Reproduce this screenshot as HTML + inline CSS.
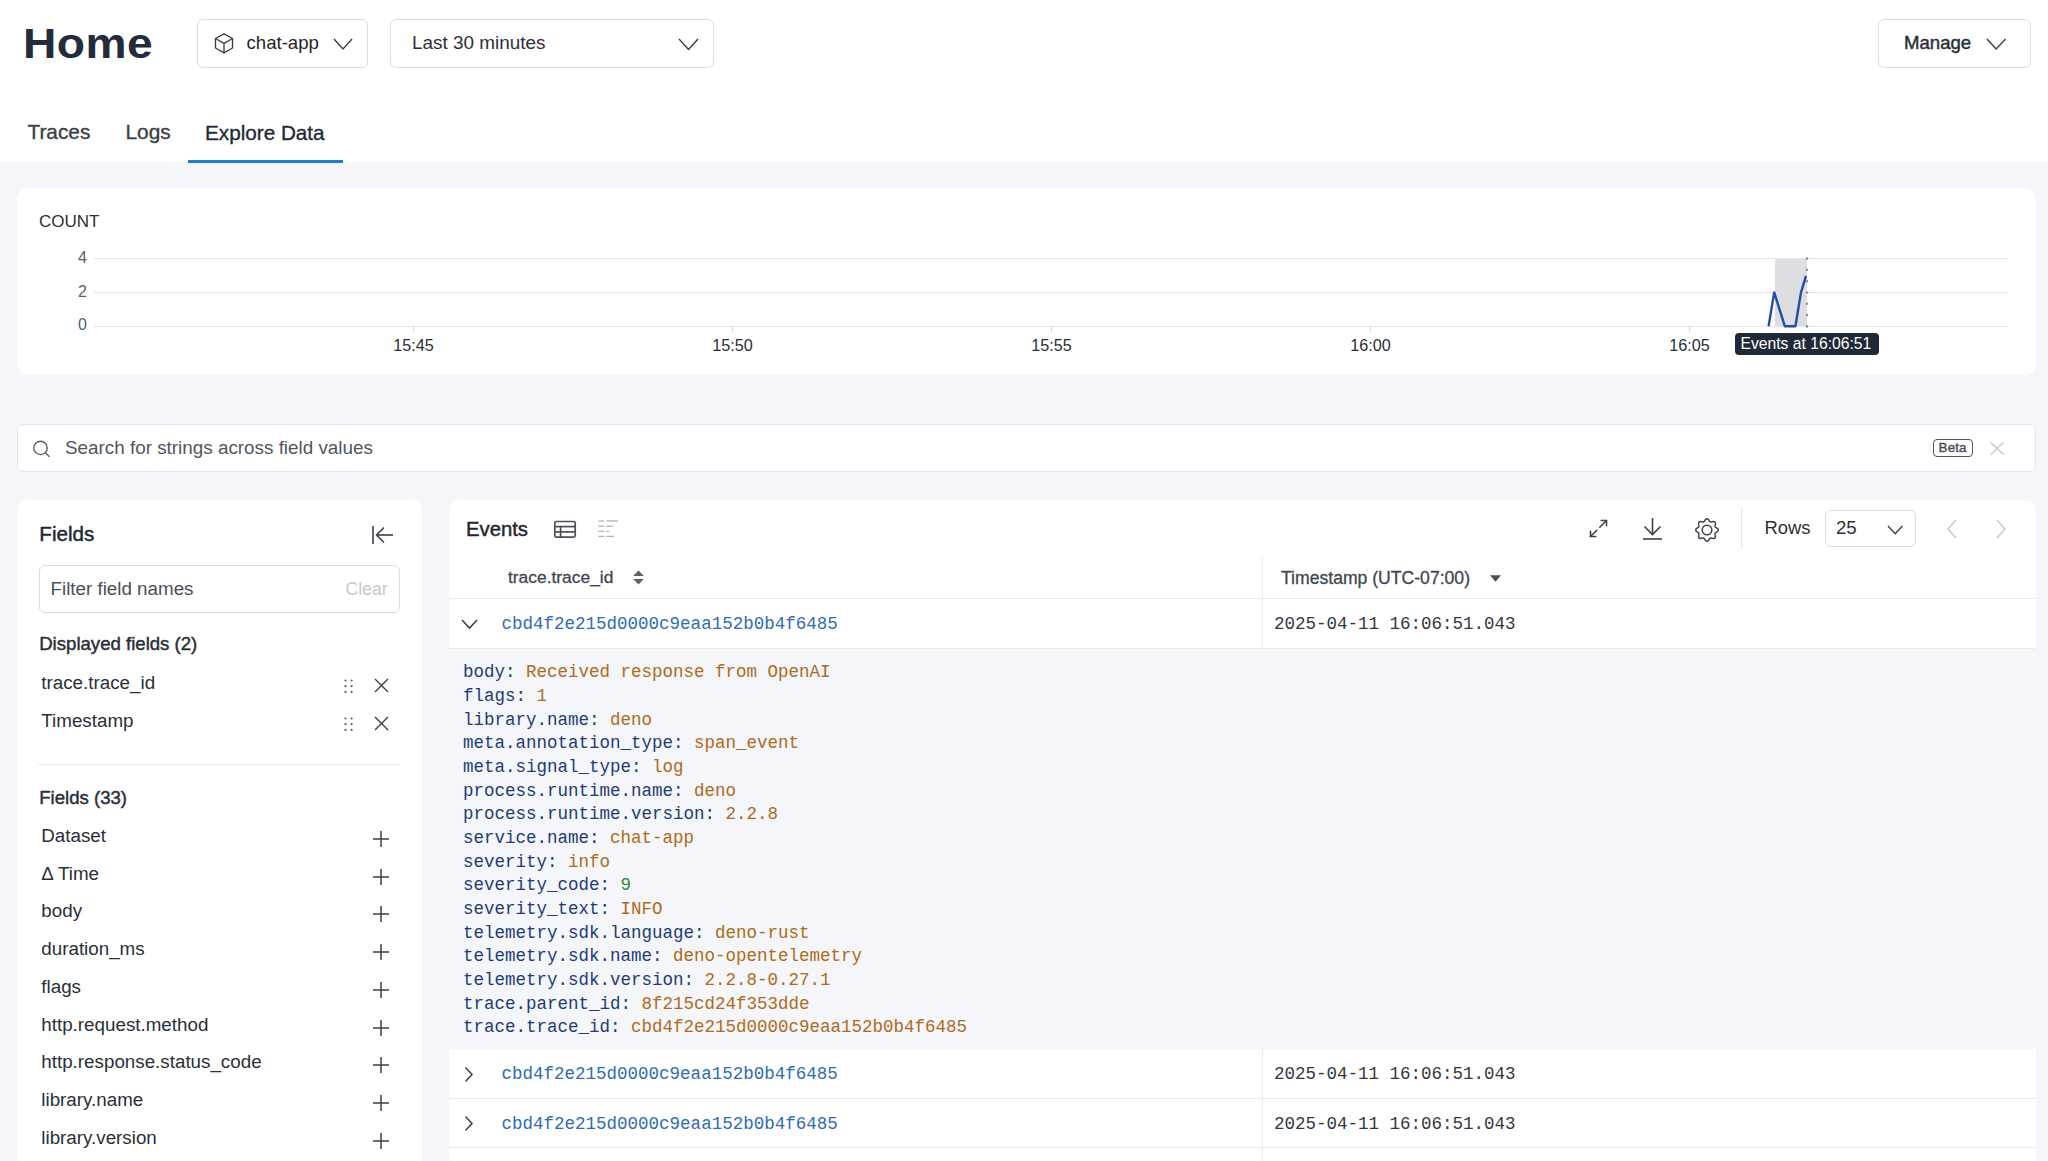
<!DOCTYPE html>
<html><head><meta charset="utf-8"><title>Home - Explore Data</title>
<style>
html,body{margin:0;padding:0}
body{width:2048px;height:1161px;overflow:hidden;position:relative;background:#f4f6f9;font-family:'Liberation Sans', sans-serif}
.t{position:absolute;white-space:nowrap}
.r{position:absolute;display:block}
</style></head><body>
<div class="r" style="left:0.0px;top:0.0px;width:2048.0px;height:162.0px;background:#fff"></div>
<div class="t" style="left:23.2px;top:22.5px;font-size:42px;line-height:42px;color:#222c3a;font-weight:700;font-family:'Liberation Sans', sans-serif;letter-spacing:0.4px;transform:scaleX(1.1);transform-origin:0 0">Home</div>
<div class="r" style="left:197.0px;top:19.0px;width:170.5px;height:49.0px;background:#fff;border:1px solid #d9dce2;border-radius:6px;box-sizing:border-box"></div>
<svg class="r" style="left:213px;top:32px" width="22" height="23" viewBox="0 0 22 23"><g fill="none" stroke="#3a3f47" stroke-width="1.35" stroke-linejoin="round"><path d="M11 1.8 L19.5 6.5 L19.5 16 L11 20.8 L2.5 16 L2.5 6.5 Z"/><path d="M2.5 6.5 L11 11.3 L19.5 6.5 M11 11.3 L11 20.8"/></g></svg>
<div class="t" style="left:246.5px;top:34.2px;font-size:18.6px;line-height:18.6px;color:#1f242b;font-weight:400;font-family:'Liberation Sans', sans-serif;">chat-app</div>
<svg class="r" style="left:332px;top:37px" width="22" height="14" viewBox="0 0 22 14"><polyline points="2,2 11.0,12.0 20.0,2" fill="none" stroke="#3a3f47" stroke-width="1.4"/></svg>
<div class="r" style="left:389.5px;top:19.0px;width:324.3px;height:49.0px;background:#fff;border:1px solid #d9dce2;border-radius:6px;box-sizing:border-box"></div>
<div class="t" style="left:412.0px;top:34.4px;font-size:18.9px;line-height:18.9px;color:#2b3038;font-weight:400;font-family:'Liberation Sans', sans-serif;">Last 30 minutes</div>
<svg class="r" style="left:677px;top:36.5px" width="23" height="14" viewBox="0 0 23 14"><polyline points="2,2 11.5,12.5 21.0,2" fill="none" stroke="#3a3f47" stroke-width="1.4"/></svg>
<div class="r" style="left:1878.0px;top:19.0px;width:153.0px;height:49.0px;background:#fff;border:1px solid #d9dce2;border-radius:6px;box-sizing:border-box"></div>
<div class="t" style="left:1904.0px;top:34.2px;font-size:18.6px;line-height:18.6px;color:#2b3038;font-weight:400;font-family:'Liberation Sans', sans-serif;-webkit-text-stroke:0.45px currentColor">Manage</div>
<svg class="r" style="left:1985px;top:37px" width="22" height="14" viewBox="0 0 22 14"><polyline points="2,2 11.2,12.0 20.5,2" fill="none" stroke="#3a3f47" stroke-width="1.4"/></svg>
<div class="t" style="left:27.5px;top:122.3px;font-size:20.8px;line-height:20.8px;color:#3b4048;font-weight:400;font-family:'Liberation Sans', sans-serif;-webkit-text-stroke:0.35px currentColor">Traces</div>
<div class="t" style="left:125.5px;top:122.3px;font-size:20.8px;line-height:20.8px;color:#3b4048;font-weight:400;font-family:'Liberation Sans', sans-serif;-webkit-text-stroke:0.35px currentColor">Logs</div>
<div class="t" style="left:205.0px;top:123.0px;font-size:20.7px;line-height:20.7px;color:#1f2937;font-weight:400;font-family:'Liberation Sans', sans-serif;-webkit-text-stroke:0.35px currentColor">Explore Data</div>
<div class="r" style="left:188.0px;top:160.0px;width:155.0px;height:3.0px;background:#1a7fd4"></div>
<div class="r" style="left:17.0px;top:188.0px;width:2019.0px;height:186.5px;background:#fff;border-radius:12px"></div>
<div class="t" style="left:39.0px;top:213.0px;font-size:17px;line-height:17px;color:#2a2f36;font-weight:400;font-family:'Liberation Sans', sans-serif;">COUNT</div>
<div class="t" style="left:78.0px;top:249.7px;font-size:16px;line-height:16px;color:#5a606b;font-weight:400;font-family:'Liberation Sans', sans-serif;">4</div>
<div class="r" style="left:94.0px;top:258.0px;width:1914.0px;height:1.0px;background:#e3e5e9"></div>
<div class="t" style="left:78.0px;top:283.6px;font-size:16px;line-height:16px;color:#5a606b;font-weight:400;font-family:'Liberation Sans', sans-serif;">2</div>
<div class="r" style="left:94.0px;top:291.9px;width:1914.0px;height:1.0px;background:#e3e5e9"></div>
<div class="t" style="left:78.0px;top:317.4px;font-size:16px;line-height:16px;color:#5a606b;font-weight:400;font-family:'Liberation Sans', sans-serif;">0</div>
<div class="r" style="left:94.0px;top:325.7px;width:1914.0px;height:1.0px;background:#e3e5e9"></div>
<div class="r" style="left:413.0px;top:326.0px;width:1.0px;height:6.0px;background:#d5d8dd"></div>
<div class="t" style="left:373.5px;top:337.2px;width:80px;text-align:center;font-size:16.2px;line-height:16.2px;color:#2a2f36;font-family:'Liberation Sans', sans-serif">15:45</div>
<div class="r" style="left:732.0px;top:326.0px;width:1.0px;height:6.0px;background:#d5d8dd"></div>
<div class="t" style="left:692.5px;top:337.2px;width:80px;text-align:center;font-size:16.2px;line-height:16.2px;color:#2a2f36;font-family:'Liberation Sans', sans-serif">15:50</div>
<div class="r" style="left:1051.0px;top:326.0px;width:1.0px;height:6.0px;background:#d5d8dd"></div>
<div class="t" style="left:1011.5px;top:337.2px;width:80px;text-align:center;font-size:16.2px;line-height:16.2px;color:#2a2f36;font-family:'Liberation Sans', sans-serif">15:55</div>
<div class="r" style="left:1370.0px;top:326.0px;width:1.0px;height:6.0px;background:#d5d8dd"></div>
<div class="t" style="left:1330.5px;top:337.2px;width:80px;text-align:center;font-size:16.2px;line-height:16.2px;color:#2a2f36;font-family:'Liberation Sans', sans-serif">16:00</div>
<div class="r" style="left:1689.0px;top:326.0px;width:1.0px;height:6.0px;background:#d5d8dd"></div>
<div class="t" style="left:1649.5px;top:337.2px;width:80px;text-align:center;font-size:16.2px;line-height:16.2px;color:#2a2f36;font-family:'Liberation Sans', sans-serif">16:05</div>
<div class="r" style="left:1775.0px;top:258.5px;width:32.0px;height:67.5px;background:#dcdee2"></div>
<svg class="r" style="left:1760px;top:250px" width="60" height="84" viewBox="0 0 60 84"><line x1="47" y1="8.6" x2="47" y2="76.5" stroke="#8c9099" stroke-width="2.6" stroke-linecap="round" stroke-dasharray="0 11.3" /><polyline points="8.6,76.2 14.2,42.4 24.8,76.2 35.4,76.2 41,42.4 46,25.8" fill="none" stroke="#1f4fa8" stroke-width="2.4" stroke-linejoin="round"/></svg>
<div class="r" style="left:1735.0px;top:333.0px;width:144.0px;height:22.0px;background:#1f2937;border-radius:4px"></div>
<div class="t" style="left:1740.5px;top:336.0px;font-size:15.7px;line-height:15.7px;color:#fff;font-weight:400;font-family:'Liberation Sans', sans-serif;">Events at 16:06:51</div>
<div class="r" style="left:17.0px;top:424.0px;width:2019.0px;height:48.0px;background:#fff;border:1px solid #e3e5ea;border-radius:6px;box-sizing:border-box"></div>
<svg class="r" style="left:32px;top:439px" width="20" height="20" viewBox="0 0 20 20"><circle cx="8.5" cy="8.9" r="6.7" fill="none" stroke="#575b63" stroke-width="1.35"/><line x1="13.4" y1="13.7" x2="17.5" y2="17.9" stroke="#575b63" stroke-width="1.35"/></svg>
<div class="t" style="left:65.0px;top:438.7px;font-size:18.85px;line-height:18.85px;color:#50565f;font-weight:400;font-family:'Liberation Sans', sans-serif;">Search for strings across field values</div>
<div class="r" style="left:1932.5px;top:438.5px;width:40.2px;height:18.7px;border:1.8px solid #505361;border-radius:4px;box-sizing:border-box"></div>
<div class="t" style="left:1932.5px;top:438.5px;width:40.2px;height:18.5px;text-align:center;font-size:13.4px;line-height:18.5px;color:#4b4e5a;font-family:'Liberation Sans', sans-serif;-webkit-text-stroke:0.4px currentColor;letter-spacing:0.1px">Beta</div>
<svg class="r" style="left:1989px;top:441px" width="16" height="15" viewBox="0 0 16 15"><path d="M1.5 1.5 L14.5 13.5 M14.5 1.5 L1.5 13.5" stroke="#c2c5cb" stroke-width="1.2"/></svg>
<div class="r" style="left:17.0px;top:500.0px;width:405.0px;height:700.0px;background:#fff;border-radius:10px"></div>
<div class="t" style="left:39.3px;top:524.2px;font-size:20.6px;line-height:20.6px;color:#222831;font-weight:400;font-family:'Liberation Sans', sans-serif;-webkit-text-stroke:0.45px currentColor">Fields</div>
<svg class="r" style="left:370px;top:524px" width="26" height="22" viewBox="0 0 26 22"><g stroke="#3a3f47" stroke-width="1.6" fill="none"><line x1="3" y1="2" x2="3" y2="20"/><line x1="7" y1="11" x2="23" y2="11"/><polyline points="14,3.5 6.5,11 14,18.5"/></g></svg>
<div class="r" style="left:38.6px;top:564.7px;width:361.9px;height:48.8px;background:#fff;border:1px solid #d8dbe3;border-radius:6px;box-sizing:border-box"></div>
<div class="t" style="left:50.5px;top:580.0px;font-size:18.8px;line-height:18.8px;color:#4a4f58;font-weight:400;font-family:'Liberation Sans', sans-serif;">Filter field names</div>
<div class="t" style="left:345.5px;top:581.0px;font-size:17.6px;line-height:17.6px;color:#c5c9d3;font-weight:400;font-family:'Liberation Sans', sans-serif;">Clear</div>
<div class="t" style="left:39.2px;top:635.4px;font-size:18.6px;line-height:18.6px;color:#2a2f38;font-weight:400;font-family:'Liberation Sans', sans-serif;-webkit-text-stroke:0.45px currentColor">Displayed fields (2)</div>
<div class="t" style="left:41.3px;top:673.9px;font-size:18.8px;line-height:18.8px;color:#2a2f38;font-weight:400;font-family:'Liberation Sans', sans-serif;">trace.trace_id</div>
<svg class="r" style="left:344.2px;top:678.8px" width="10" height="15" viewBox="0 0 10 15"><circle cx="1.5" cy="1.5" r="1.1" fill="#5a5e66"/><circle cx="1.5" cy="7.2" r="1.1" fill="#5a5e66"/><circle cx="1.5" cy="12.9" r="1.1" fill="#5a5e66"/><circle cx="7.6" cy="1.5" r="1.1" fill="#5a5e66"/><circle cx="7.6" cy="7.2" r="1.1" fill="#5a5e66"/><circle cx="7.6" cy="12.9" r="1.1" fill="#5a5e66"/></svg>
<svg class="r" style="left:373px;top:677px" width="17" height="17" viewBox="0 0 17 17"><path d="M2 2 L15 15 M15 2 L2 15" stroke="#3a3f47" stroke-width="1.35"/></svg>
<div class="t" style="left:41.3px;top:712.0px;font-size:18.8px;line-height:18.8px;color:#2a2f38;font-weight:400;font-family:'Liberation Sans', sans-serif;">Timestamp</div>
<svg class="r" style="left:344.2px;top:716.9px" width="10" height="15" viewBox="0 0 10 15"><circle cx="1.5" cy="1.5" r="1.1" fill="#5a5e66"/><circle cx="1.5" cy="7.2" r="1.1" fill="#5a5e66"/><circle cx="1.5" cy="12.9" r="1.1" fill="#5a5e66"/><circle cx="7.6" cy="1.5" r="1.1" fill="#5a5e66"/><circle cx="7.6" cy="7.2" r="1.1" fill="#5a5e66"/><circle cx="7.6" cy="12.9" r="1.1" fill="#5a5e66"/></svg>
<svg class="r" style="left:373px;top:715px" width="17" height="17" viewBox="0 0 17 17"><path d="M2 2 L15 15 M15 2 L2 15" stroke="#3a3f47" stroke-width="1.35"/></svg>
<div class="r" style="left:38.0px;top:764.2px;width:362.0px;height:1.0px;background:#e9ebef"></div>
<div class="t" style="left:39.2px;top:788.7px;font-size:18.6px;line-height:18.6px;color:#2a2f38;font-weight:400;font-family:'Liberation Sans', sans-serif;-webkit-text-stroke:0.45px currentColor">Fields (33)</div>
<div class="t" style="left:41.3px;top:827.0px;font-size:18.8px;line-height:18.8px;color:#2a2f38;font-weight:400;font-family:'Liberation Sans', sans-serif;">Dataset</div>
<svg class="r" style="left:371px;top:829px" width="20" height="20" viewBox="0 0 20 20"><path d="M10.0 2 L10.0 18 M2 10.0 L18 10.0" stroke="#3a3f47" stroke-width="1.5"/></svg>
<div class="t" style="left:41.3px;top:864.7px;font-size:18.8px;line-height:18.8px;color:#2a2f38;font-weight:400;font-family:'Liberation Sans', sans-serif;">&Delta; Time</div>
<svg class="r" style="left:371px;top:867px" width="20" height="20" viewBox="0 0 20 20"><path d="M10.0 2 L10.0 18 M2 10.0 L18 10.0" stroke="#3a3f47" stroke-width="1.5"/></svg>
<div class="t" style="left:41.3px;top:902.4px;font-size:18.8px;line-height:18.8px;color:#2a2f38;font-weight:400;font-family:'Liberation Sans', sans-serif;">body</div>
<svg class="r" style="left:371px;top:904px" width="20" height="20" viewBox="0 0 20 20"><path d="M10.0 2 L10.0 18 M2 10.0 L18 10.0" stroke="#3a3f47" stroke-width="1.5"/></svg>
<div class="t" style="left:41.3px;top:940.1px;font-size:18.8px;line-height:18.8px;color:#2a2f38;font-weight:400;font-family:'Liberation Sans', sans-serif;">duration_ms</div>
<svg class="r" style="left:371px;top:942px" width="20" height="20" viewBox="0 0 20 20"><path d="M10.0 2 L10.0 18 M2 10.0 L18 10.0" stroke="#3a3f47" stroke-width="1.5"/></svg>
<div class="t" style="left:41.3px;top:977.8px;font-size:18.8px;line-height:18.8px;color:#2a2f38;font-weight:400;font-family:'Liberation Sans', sans-serif;">flags</div>
<svg class="r" style="left:371px;top:980px" width="20" height="20" viewBox="0 0 20 20"><path d="M10.0 2 L10.0 18 M2 10.0 L18 10.0" stroke="#3a3f47" stroke-width="1.5"/></svg>
<div class="t" style="left:41.3px;top:1015.5px;font-size:18.8px;line-height:18.8px;color:#2a2f38;font-weight:400;font-family:'Liberation Sans', sans-serif;">http.request.method</div>
<svg class="r" style="left:371px;top:1018px" width="20" height="20" viewBox="0 0 20 20"><path d="M10.0 2 L10.0 18 M2 10.0 L18 10.0" stroke="#3a3f47" stroke-width="1.5"/></svg>
<div class="t" style="left:41.3px;top:1053.2px;font-size:18.8px;line-height:18.8px;color:#2a2f38;font-weight:400;font-family:'Liberation Sans', sans-serif;">http.response.status_code</div>
<svg class="r" style="left:371px;top:1055px" width="20" height="20" viewBox="0 0 20 20"><path d="M10.0 2 L10.0 18 M2 10.0 L18 10.0" stroke="#3a3f47" stroke-width="1.5"/></svg>
<div class="t" style="left:41.3px;top:1090.9px;font-size:18.8px;line-height:18.8px;color:#2a2f38;font-weight:400;font-family:'Liberation Sans', sans-serif;">library.name</div>
<svg class="r" style="left:371px;top:1093px" width="20" height="20" viewBox="0 0 20 20"><path d="M10.0 2 L10.0 18 M2 10.0 L18 10.0" stroke="#3a3f47" stroke-width="1.5"/></svg>
<div class="t" style="left:41.3px;top:1128.6px;font-size:18.8px;line-height:18.8px;color:#2a2f38;font-weight:400;font-family:'Liberation Sans', sans-serif;">library.version</div>
<svg class="r" style="left:371px;top:1131px" width="20" height="20" viewBox="0 0 20 20"><path d="M10.0 2 L10.0 18 M2 10.0 L18 10.0" stroke="#3a3f47" stroke-width="1.5"/></svg>
<div class="r" style="left:449.0px;top:500.0px;width:1587.0px;height:700.0px;background:#fff;border-radius:10px"></div>
<div class="t" style="left:466.0px;top:519.4px;font-size:20.3px;line-height:20.3px;color:#222831;font-weight:400;font-family:'Liberation Sans', sans-serif;-webkit-text-stroke:0.45px currentColor">Events</div>
<svg class="r" style="left:553px;top:520px" width="24" height="19" viewBox="0 0 24 19"><g fill="none" stroke="#4b4f58" stroke-width="1.7"><rect x="1.8" y="1.5" width="20.4" height="15.6" rx="1.5"/><line x1="1.8" y1="6.6" x2="22.2" y2="6.6"/><line x1="1.8" y1="11.9" x2="22.2" y2="11.9"/><line x1="7.6" y1="6.6" x2="7.6" y2="17.1"/></g></svg>
<svg class="r" style="left:597px;top:519px" width="23" height="20" viewBox="0 0 23 20"><g stroke="#a9adc0" stroke-width="1.2"><line x1="1.4" y1="2" x2="7.3" y2="2"/><line x1="9.3" y1="2" x2="21" y2="2"/><line x1="1.4" y1="7.2" x2="7.3" y2="7.2"/><line x1="9.3" y1="7.2" x2="16.2" y2="7.2"/><line x1="1.4" y1="12.3" x2="7.3" y2="12.3"/><line x1="9.3" y1="12.3" x2="12.3" y2="12.3"/><line x1="1.4" y1="17.4" x2="7.3" y2="17.4"/><line x1="9.3" y1="17.4" x2="17" y2="17.4"/></g></svg>
<svg class="r" style="left:1587px;top:518px" width="23" height="22" viewBox="0 0 23 22"><g stroke="#3e434b" stroke-width="1.6" fill="none" stroke-linecap="round"><line x1="3.5" y1="18.5" x2="9.8" y2="12.2"/><line x1="12.8" y1="9.2" x2="19.5" y2="2.5"/><polyline points="14.2,2.5 19.5,2.5 19.5,7.8"/><polyline points="3.5,13.2 3.5,18.5 8.8,18.5"/></g></svg>
<svg class="r" style="left:1641px;top:516px" width="23" height="25" viewBox="0 0 23 25"><g stroke="#3e434b" stroke-width="1.6" fill="none"><line x1="11.5" y1="2" x2="11.5" y2="18.5"/><polyline points="3.5,10.5 11.5,18.5 19.5,10.5"/><line x1="2" y1="23" x2="21" y2="23"/></g></svg>
<svg class="r" style="left:1694.5px;top:517.5px" width="24" height="24" viewBox="0 0 24 24"><g stroke="#3e434b" stroke-width="1.5" fill="none"><polygon points="23.25,12.00 23.24,12.20 23.19,12.39 23.13,12.58 23.03,12.77 22.92,12.96 22.78,13.13 22.62,13.30 22.45,13.47 22.26,13.62 22.06,13.77 21.86,13.92 21.65,14.05 21.45,14.18 21.25,14.31 21.06,14.43 20.87,14.54 20.70,14.66 20.55,14.78 20.41,14.90 20.29,15.02 20.19,15.15 20.12,15.28 20.06,15.42 20.02,15.57 20.00,15.73 20.00,15.90 20.01,16.08 20.04,16.27 20.07,16.47 20.12,16.69 20.17,16.91 20.22,17.14 20.28,17.38 20.33,17.62 20.37,17.86 20.40,18.10 20.42,18.35 20.43,18.59 20.42,18.82 20.39,19.04 20.35,19.26 20.28,19.46 20.19,19.64 20.08,19.81 19.95,19.95 19.81,20.08 19.64,20.19 19.46,20.28 19.26,20.35 19.04,20.39 18.82,20.42 18.59,20.43 18.35,20.42 18.10,20.40 17.86,20.37 17.62,20.33 17.38,20.28 17.14,20.22 16.91,20.17 16.69,20.12 16.47,20.07 16.27,20.04 16.08,20.01 15.90,20.00 15.73,20.00 15.57,20.02 15.42,20.06 15.28,20.12 15.15,20.19 15.02,20.29 14.90,20.41 14.78,20.55 14.66,20.70 14.54,20.87 14.43,21.06 14.31,21.25 14.18,21.45 14.05,21.65 13.92,21.86 13.77,22.06 13.62,22.26 13.47,22.45 13.30,22.62 13.13,22.78 12.96,22.92 12.77,23.03 12.58,23.13 12.39,23.19 12.20,23.24 12.00,23.25 11.80,23.24 11.61,23.19 11.42,23.13 11.23,23.03 11.04,22.92 10.87,22.78 10.70,22.62 10.53,22.45 10.38,22.26 10.23,22.06 10.08,21.86 9.95,21.65 9.82,21.45 9.69,21.25 9.57,21.06 9.46,20.87 9.34,20.70 9.22,20.55 9.10,20.41 8.98,20.29 8.85,20.19 8.72,20.12 8.58,20.06 8.43,20.02 8.27,20.00 8.10,20.00 7.92,20.01 7.73,20.04 7.53,20.07 7.31,20.12 7.09,20.17 6.86,20.22 6.62,20.28 6.38,20.33 6.14,20.37 5.90,20.40 5.65,20.42 5.41,20.43 5.18,20.42 4.96,20.39 4.74,20.35 4.54,20.28 4.36,20.19 4.19,20.08 4.05,19.95 3.92,19.81 3.81,19.64 3.72,19.46 3.65,19.26 3.61,19.04 3.58,18.82 3.57,18.59 3.58,18.35 3.60,18.10 3.63,17.86 3.67,17.62 3.72,17.38 3.78,17.14 3.83,16.91 3.88,16.69 3.93,16.47 3.96,16.27 3.99,16.08 4.00,15.90 4.00,15.73 3.98,15.57 3.94,15.42 3.88,15.28 3.81,15.15 3.71,15.02 3.59,14.90 3.45,14.78 3.30,14.66 3.13,14.54 2.94,14.43 2.75,14.31 2.55,14.18 2.35,14.05 2.14,13.92 1.94,13.77 1.74,13.62 1.55,13.47 1.38,13.30 1.22,13.13 1.08,12.96 0.97,12.77 0.87,12.58 0.81,12.39 0.76,12.20 0.75,12.00 0.76,11.80 0.81,11.61 0.87,11.42 0.97,11.23 1.08,11.04 1.22,10.87 1.38,10.70 1.55,10.53 1.74,10.38 1.94,10.23 2.14,10.08 2.35,9.95 2.55,9.82 2.75,9.69 2.94,9.57 3.13,9.46 3.30,9.34 3.45,9.22 3.59,9.10 3.71,8.98 3.81,8.85 3.88,8.72 3.94,8.58 3.98,8.43 4.00,8.27 4.00,8.10 3.99,7.92 3.96,7.73 3.93,7.53 3.88,7.31 3.83,7.09 3.78,6.86 3.72,6.62 3.67,6.38 3.63,6.14 3.60,5.90 3.58,5.65 3.57,5.41 3.58,5.18 3.61,4.96 3.65,4.74 3.72,4.54 3.81,4.36 3.92,4.19 4.05,4.05 4.19,3.92 4.36,3.81 4.54,3.72 4.74,3.65 4.96,3.61 5.18,3.58 5.41,3.57 5.65,3.58 5.90,3.60 6.14,3.63 6.38,3.67 6.62,3.72 6.86,3.78 7.09,3.83 7.31,3.88 7.53,3.93 7.73,3.96 7.92,3.99 8.10,4.00 8.27,4.00 8.43,3.98 8.58,3.94 8.72,3.88 8.85,3.81 8.98,3.71 9.10,3.59 9.22,3.45 9.34,3.30 9.46,3.13 9.57,2.94 9.69,2.75 9.82,2.55 9.95,2.35 10.08,2.14 10.23,1.94 10.38,1.74 10.53,1.55 10.70,1.38 10.87,1.22 11.04,1.08 11.23,0.97 11.42,0.87 11.61,0.81 11.80,0.76 12.00,0.75 12.20,0.76 12.39,0.81 12.58,0.87 12.77,0.97 12.96,1.08 13.13,1.22 13.30,1.38 13.47,1.55 13.62,1.74 13.77,1.94 13.92,2.14 14.05,2.35 14.18,2.55 14.31,2.75 14.43,2.94 14.54,3.13 14.66,3.30 14.78,3.45 14.90,3.59 15.02,3.71 15.15,3.81 15.28,3.88 15.42,3.94 15.57,3.98 15.73,4.00 15.90,4.00 16.08,3.99 16.27,3.96 16.47,3.93 16.69,3.88 16.91,3.83 17.14,3.78 17.38,3.72 17.62,3.67 17.86,3.63 18.10,3.60 18.35,3.58 18.59,3.57 18.82,3.58 19.04,3.61 19.26,3.65 19.46,3.72 19.64,3.81 19.81,3.92 19.95,4.05 20.08,4.19 20.19,4.36 20.28,4.54 20.35,4.74 20.39,4.96 20.42,5.18 20.43,5.41 20.42,5.65 20.40,5.90 20.37,6.14 20.33,6.38 20.28,6.62 20.22,6.86 20.17,7.09 20.12,7.31 20.07,7.53 20.04,7.73 20.01,7.92 20.00,8.10 20.00,8.27 20.02,8.43 20.06,8.58 20.12,8.72 20.19,8.85 20.29,8.98 20.41,9.10 20.55,9.22 20.70,9.34 20.87,9.46 21.06,9.57 21.25,9.69 21.45,9.82 21.65,9.95 21.86,10.08 22.06,10.23 22.26,10.38 22.45,10.53 22.62,10.70 22.78,10.87 22.92,11.04 23.03,11.23 23.13,11.42 23.19,11.61 23.24,11.80 23.25,12.00"/><circle cx="12" cy="12" r="4.8"/></g></svg>
<div class="r" style="left:1741.0px;top:508.0px;width:1.0px;height:40.0px;background:#e3e5ea"></div>
<div class="t" style="left:1764.5px;top:519.4px;font-size:18.4px;line-height:18.4px;color:#2b3038;font-weight:400;font-family:'Liberation Sans', sans-serif;">Rows</div>
<div class="r" style="left:1824.5px;top:509.8px;width:91.8px;height:37.6px;background:#fff;border:1px solid #d8dbe3;border-radius:6px;box-sizing:border-box"></div>
<div class="t" style="left:1836.0px;top:519.2px;font-size:18.6px;line-height:18.6px;color:#2b3038;font-weight:400;font-family:'Liberation Sans', sans-serif;">25</div>
<svg class="r" style="left:1886px;top:523.6px" width="18" height="12" viewBox="0 0 18 12"><polyline points="2,2 9.2,9.8 16.4,2" fill="none" stroke="#3a3f47" stroke-width="1.4"/></svg>
<svg class="r" style="left:1945px;top:518px" width="14" height="22" viewBox="0 0 14 22"><polyline points="11,2 3,11 11,20" fill="none" stroke="#c3c6cd" stroke-width="1.4"/></svg>
<svg class="r" style="left:1994px;top:518px" width="14" height="22" viewBox="0 0 14 22"><polyline points="3,2 11,11 3,20" fill="none" stroke="#c3c6cd" stroke-width="1.4"/></svg>
<div class="t" style="left:508.0px;top:569.4px;font-size:17.4px;line-height:17.4px;color:#3f4652;font-weight:400;font-family:'Liberation Sans', sans-serif;-webkit-text-stroke:0.3px currentColor">trace.trace_id</div>
<svg class="r" style="left:632px;top:569px" width="13" height="17" viewBox="0 0 13 17"><path d="M6.5 1.5 L11.8 7 L1.2 7 Z M6.5 15.5 L11.8 10 L1.2 10 Z" fill="#5b606b"/></svg>
<div class="t" style="left:1281.0px;top:569.7px;font-size:17.6px;line-height:17.6px;color:#3f4652;font-weight:400;font-family:'Liberation Sans', sans-serif;-webkit-text-stroke:0.3px currentColor">Timestamp (UTC-07:00)</div>
<svg class="r" style="left:1489px;top:574px" width="13" height="9" viewBox="0 0 13 9"><path d="M1 1.2 L12 1.2 L6.5 7.8 Z" fill="#4b4f5a"/></svg>
<div class="r" style="left:449.0px;top:597.5px;width:1587.0px;height:1.0px;background:#e9ebef"></div>
<div class="r" style="left:1262.2px;top:556.0px;width:1.0px;height:92.0px;background:#e9ebef"></div>
<svg class="r" style="left:460px;top:618.0px" width="19" height="12" viewBox="0 0 19 12"><polyline points="2,2 9.5,10.1 17.0,2" fill="none" stroke="#3a3f47" stroke-width="1.5"/></svg>
<div class="t" style="left:501.6px;top:615.5px;font-size:17.5px;line-height:17.5px;color:#2d6cb5;font-weight:400;font-family:'Liberation Mono', monospace;">cbd4f2e215d0000c9eaa152b0b4f6485</div>
<div class="t" style="left:1274.0px;top:615.5px;font-size:17.5px;line-height:17.5px;color:#32373f;font-weight:400;font-family:'Liberation Mono', monospace;">2025-04-11 16:06:51.043</div>
<div class="r" style="left:449.0px;top:647.5px;width:1587.0px;height:1.0px;background:#e9ebef"></div>
<div class="r" style="left:449.0px;top:648.5px;width:1587.0px;height:400.0px;background:#f4f6f9"></div>
<div class="t" style="left:462.9px;top:664.3px;font-size:17.5px;line-height:17.5px;color:#1d3b78;font-weight:400;font-family:'Liberation Mono', monospace;white-space:pre"><span style="color:#1d3b78">body:</span> <span style="color:#b06a18">Received response from OpenAI</span></div>
<div class="t" style="left:462.9px;top:688.0px;font-size:17.5px;line-height:17.5px;color:#1d3b78;font-weight:400;font-family:'Liberation Mono', monospace;white-space:pre"><span style="color:#1d3b78">flags:</span> <span style="color:#b06a18">1</span></div>
<div class="t" style="left:462.9px;top:711.6px;font-size:17.5px;line-height:17.5px;color:#1d3b78;font-weight:400;font-family:'Liberation Mono', monospace;white-space:pre"><span style="color:#1d3b78">library.name:</span> <span style="color:#b06a18">deno</span></div>
<div class="t" style="left:462.9px;top:735.3px;font-size:17.5px;line-height:17.5px;color:#1d3b78;font-weight:400;font-family:'Liberation Mono', monospace;white-space:pre"><span style="color:#1d3b78">meta.annotation_type:</span> <span style="color:#b06a18">span_event</span></div>
<div class="t" style="left:462.9px;top:759.0px;font-size:17.5px;line-height:17.5px;color:#1d3b78;font-weight:400;font-family:'Liberation Mono', monospace;white-space:pre"><span style="color:#1d3b78">meta.signal_type:</span> <span style="color:#b06a18">log</span></div>
<div class="t" style="left:462.9px;top:782.7px;font-size:17.5px;line-height:17.5px;color:#1d3b78;font-weight:400;font-family:'Liberation Mono', monospace;white-space:pre"><span style="color:#1d3b78">process.runtime.name:</span> <span style="color:#b06a18">deno</span></div>
<div class="t" style="left:462.9px;top:806.3px;font-size:17.5px;line-height:17.5px;color:#1d3b78;font-weight:400;font-family:'Liberation Mono', monospace;white-space:pre"><span style="color:#1d3b78">process.runtime.version:</span> <span style="color:#b06a18">2.2.8</span></div>
<div class="t" style="left:462.9px;top:830.0px;font-size:17.5px;line-height:17.5px;color:#1d3b78;font-weight:400;font-family:'Liberation Mono', monospace;white-space:pre"><span style="color:#1d3b78">service.name:</span> <span style="color:#b06a18">chat-app</span></div>
<div class="t" style="left:462.9px;top:853.7px;font-size:17.5px;line-height:17.5px;color:#1d3b78;font-weight:400;font-family:'Liberation Mono', monospace;white-space:pre"><span style="color:#1d3b78">severity:</span> <span style="color:#b06a18">info</span></div>
<div class="t" style="left:462.9px;top:877.3px;font-size:17.5px;line-height:17.5px;color:#1d3b78;font-weight:400;font-family:'Liberation Mono', monospace;white-space:pre"><span style="color:#1d3b78">severity_code:</span> <span style="color:#2e8a2e">9</span></div>
<div class="t" style="left:462.9px;top:901.0px;font-size:17.5px;line-height:17.5px;color:#1d3b78;font-weight:400;font-family:'Liberation Mono', monospace;white-space:pre"><span style="color:#1d3b78">severity_text:</span> <span style="color:#b06a18">INFO</span></div>
<div class="t" style="left:462.9px;top:924.7px;font-size:17.5px;line-height:17.5px;color:#1d3b78;font-weight:400;font-family:'Liberation Mono', monospace;white-space:pre"><span style="color:#1d3b78">telemetry.sdk.language:</span> <span style="color:#b06a18">deno-rust</span></div>
<div class="t" style="left:462.9px;top:948.3px;font-size:17.5px;line-height:17.5px;color:#1d3b78;font-weight:400;font-family:'Liberation Mono', monospace;white-space:pre"><span style="color:#1d3b78">telemetry.sdk.name:</span> <span style="color:#b06a18">deno-opentelemetry</span></div>
<div class="t" style="left:462.9px;top:972.0px;font-size:17.5px;line-height:17.5px;color:#1d3b78;font-weight:400;font-family:'Liberation Mono', monospace;white-space:pre"><span style="color:#1d3b78">telemetry.sdk.version:</span> <span style="color:#b06a18">2.2.8-0.27.1</span></div>
<div class="t" style="left:462.9px;top:995.7px;font-size:17.5px;line-height:17.5px;color:#1d3b78;font-weight:400;font-family:'Liberation Mono', monospace;white-space:pre"><span style="color:#1d3b78">trace.parent_id:</span> <span style="color:#b06a18">8f215cd24f353dde</span></div>
<div class="t" style="left:462.9px;top:1019.4px;font-size:17.5px;line-height:17.5px;color:#1d3b78;font-weight:400;font-family:'Liberation Mono', monospace;white-space:pre"><span style="color:#1d3b78">trace.trace_id:</span> <span style="color:#b06a18">cbd4f2e215d0000c9eaa152b0b4f6485</span></div>
<svg class="r" style="left:463px;top:1064.5px" width="12" height="19" viewBox="0 0 12 19"><polyline points="2.5,2.5 9,9.5 2.5,16.5" fill="none" stroke="#3a3f47" stroke-width="1.5"/></svg>
<div class="t" style="left:501.6px;top:1066.0px;font-size:17.5px;line-height:17.5px;color:#2d6cb5;font-weight:400;font-family:'Liberation Mono', monospace;">cbd4f2e215d0000c9eaa152b0b4f6485</div>
<div class="t" style="left:1274.0px;top:1066.0px;font-size:17.5px;line-height:17.5px;color:#32373f;font-weight:400;font-family:'Liberation Mono', monospace;">2025-04-11 16:06:51.043</div>
<div class="r" style="left:449.0px;top:1097.8px;width:1587.0px;height:1.0px;background:#e9ebef"></div>
<div class="r" style="left:1262.2px;top:1048.5px;width:1.0px;height:112.5px;background:#e9ebef"></div>
<svg class="r" style="left:463px;top:1114.3px" width="12" height="19" viewBox="0 0 12 19"><polyline points="2.5,2.5 9,9.5 2.5,16.5" fill="none" stroke="#3a3f47" stroke-width="1.5"/></svg>
<div class="t" style="left:501.6px;top:1115.8px;font-size:17.5px;line-height:17.5px;color:#2d6cb5;font-weight:400;font-family:'Liberation Mono', monospace;">cbd4f2e215d0000c9eaa152b0b4f6485</div>
<div class="t" style="left:1274.0px;top:1115.8px;font-size:17.5px;line-height:17.5px;color:#32373f;font-weight:400;font-family:'Liberation Mono', monospace;">2025-04-11 16:06:51.043</div>
<div class="r" style="left:449.0px;top:1146.8px;width:1587.0px;height:1.0px;background:#e9ebef"></div>
</body></html>
